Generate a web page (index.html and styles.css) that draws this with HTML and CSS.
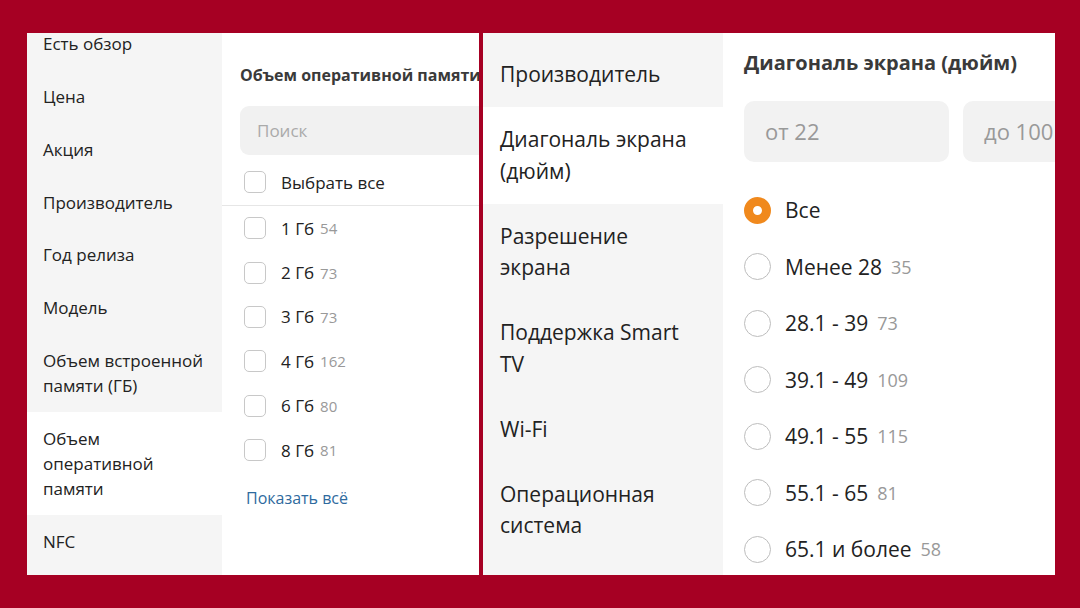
FILE: index.html
```html
<!DOCTYPE html>
<html lang="ru">
<head>
<meta charset="utf-8">
<title>Фильтры</title>
<link rel="stylesheet" href="styles.css">
</head>
<body>
<div class="stage">
  <section class="panel panel-left">
    <nav class="side side-sm">
      <ul class="side-list">
        <li class="side-item">Есть обзор</li>
        <li class="side-item">Цена</li>
        <li class="side-item">Акция</li>
        <li class="side-item">Производитель</li>
        <li class="side-item">Год релиза</li>
        <li class="side-item">Модель</li>
        <li class="side-item">Объем встроенной памяти (ГБ)</li>
        <li class="side-item active">Объем оперативной памяти</li>
        <li class="side-item">NFC</li>
      </ul>
    </nav>
    <div class="content content-sm">
      <h3 class="title">Объем оперативной памяти</h3>
      <div class="search">Поиск</div>
      <div class="check-row check-all"><span class="box"></span><span class="label">Выбрать все</span></div>
      <div class="divider"></div>
      <div class="check-row"><span class="box"></span><span class="label">1 Гб</span><span class="count">54</span></div>
      <div class="check-row"><span class="box"></span><span class="label">2 Гб</span><span class="count">73</span></div>
      <div class="check-row"><span class="box"></span><span class="label">3 Гб</span><span class="count">73</span></div>
      <div class="check-row"><span class="box"></span><span class="label">4 Гб</span><span class="count">162</span></div>
      <div class="check-row"><span class="box"></span><span class="label">6 Гб</span><span class="count">80</span></div>
      <div class="check-row"><span class="box"></span><span class="label">8 Гб</span><span class="count">81</span></div>
      <a class="more" href="#">Показать всё</a>
    </div>
  </section>

  <section class="panel panel-right">
    <nav class="side side-lg">
      <ul class="side-list">
        <li class="side-item">Производитель</li>
        <li class="side-item active">Диагональ экрана (дюйм)</li>
        <li class="side-item">Разрешение экрана</li>
        <li class="side-item">Поддержка Smart TV</li>
        <li class="side-item">Wi-Fi</li>
        <li class="side-item">Операционная система</li>
      </ul>
    </nav>
    <div class="content content-lg">
      <h3 class="title">Диагональ экрана (дюйм)</h3>
      <div class="range">
        <div class="range-field">от 22</div>
        <div class="range-field">до 100</div>
      </div>
      <ul class="radio-list">
        <li class="radio-row"><span class="radio checked"></span><span class="label">Все</span></li>
        <li class="radio-row"><span class="radio"></span><span class="label">Менее 28</span><span class="count">35</span></li>
        <li class="radio-row"><span class="radio"></span><span class="label">28.1 - 39</span><span class="count">73</span></li>
        <li class="radio-row"><span class="radio"></span><span class="label">39.1 - 49</span><span class="count">109</span></li>
        <li class="radio-row"><span class="radio"></span><span class="label">49.1 - 55</span><span class="count">115</span></li>
        <li class="radio-row"><span class="radio"></span><span class="label">55.1 - 65</span><span class="count">81</span></li>
        <li class="radio-row"><span class="radio"></span><span class="label">65.1 и более</span><span class="count">58</span></li>
      </ul>
    </div>
  </section>
</div>
</body>
</html>
```

FILE: styles.css
```css
* { box-sizing: border-box; }

html, body {
  margin: 0;
  padding: 0;
}

body {
  width: 1080px;
  height: 608px;
  background: #a60023;
  font-family: "Open Sans", "Noto Sans", sans-serif;
  color: #222;
  overflow: hidden;
}

.stage {
  display: flex;
  gap: 4px;
  padding: 33px 0 0 27px;
}

.panel {
  display: flex;
  height: 542px;
  background: #fff;
  overflow: hidden;
}

.panel-left { width: 452px; }
.panel-right { width: 572px; }

.side {
  flex: none;
  background: #f5f5f5;
  overflow: hidden;
}

.side-list {
  list-style: none;
  margin: 0;
  padding: 0;
}

.side-item.active { background: #fff; }

/* small (left) sidebar */
.side-sm { width: 195px; }
.side-sm .side-list { margin-top: -15.6px; }
.side-sm .side-item {
  padding: 13.9px 14px 13.9px 16px;
  font-size: 17px;
  line-height: 25px;
}

/* large (right) sidebar */
.side-lg { width: 240px; }
.side-lg .side-list { padding-top: 9.4px; }
.side-lg .side-item {
  padding: 16.75px 24px 16.75px 17px;
  font-size: 21px;
  line-height: 31.5px;
}

.content {
  flex: 1;
  min-width: 0;
  overflow: hidden;
}

.title {
  margin: 0;
  font-weight: 700;
  color: #3a3a3a;
  white-space: nowrap;
}

.count {
  color: #999;
  margin-left: 6px;
}

/* left content */
.content-sm { padding-left: 18px; }
.content-sm .title {
  font-size: 16px;
  line-height: 22px;
  margin-top: 31px;
}

.search {
  margin-top: 20px;
  width: 300px;
  height: 49px;
  border-radius: 9px;
  background: #f1f1f1;
  color: #aaa;
  font-size: 17px;
  line-height: 49px;
  padding-left: 17px;
}

.check-row {
  display: flex;
  align-items: center;
  height: 44.4px;
  padding-left: 4px;
  font-size: 17px;
}

.check-row.check-all {
  margin-top: 6px;
  height: 42px;
}

.check-row .count { font-size: 15px; }

.box {
  flex: none;
  width: 22px;
  height: 22px;
  border: 1.5px solid #c8c8c8;
  border-radius: 5px;
  margin-right: 15px;
}

.divider {
  margin: 2px 0 0 -18px;
  height: 1px;
  background: #e6e6e6;
}

.more {
  display: block;
  margin: 14px 0 0 6px;
  font-size: 16px;
  line-height: 24px;
  color: #2e6a9e;
  text-decoration: none;
}

/* right content */
.content-lg { padding-left: 21px; }
.content-lg .title {
  font-size: 20px;
  line-height: 28px;
  margin-top: 16px;
}

.range {
  display: flex;
  gap: 14px;
  margin-top: 24px;
}

.range-field {
  flex: none;
  width: 205px;
  height: 61px;
  border-radius: 10px;
  background: #f2f2f2;
  color: #999;
  font-size: 22px;
  line-height: 61px;
  padding-left: 21px;
  white-space: nowrap;
}

.radio-list {
  list-style: none;
  margin: 20px 0 0;
  padding: 0;
}

.radio-row {
  display: flex;
  align-items: center;
  height: 56.5px;
  font-size: 21px;
}

.radio-row .count {
  font-size: 18px;
  margin-left: 9px;
}

.radio {
  flex: none;
  width: 27px;
  height: 27px;
  border: 1.5px solid #bdbdbd;
  border-radius: 50%;
  margin-right: 14px;
}

.radio.checked {
  border: 9px solid #f0891d;
  background: #fff;
}
```
